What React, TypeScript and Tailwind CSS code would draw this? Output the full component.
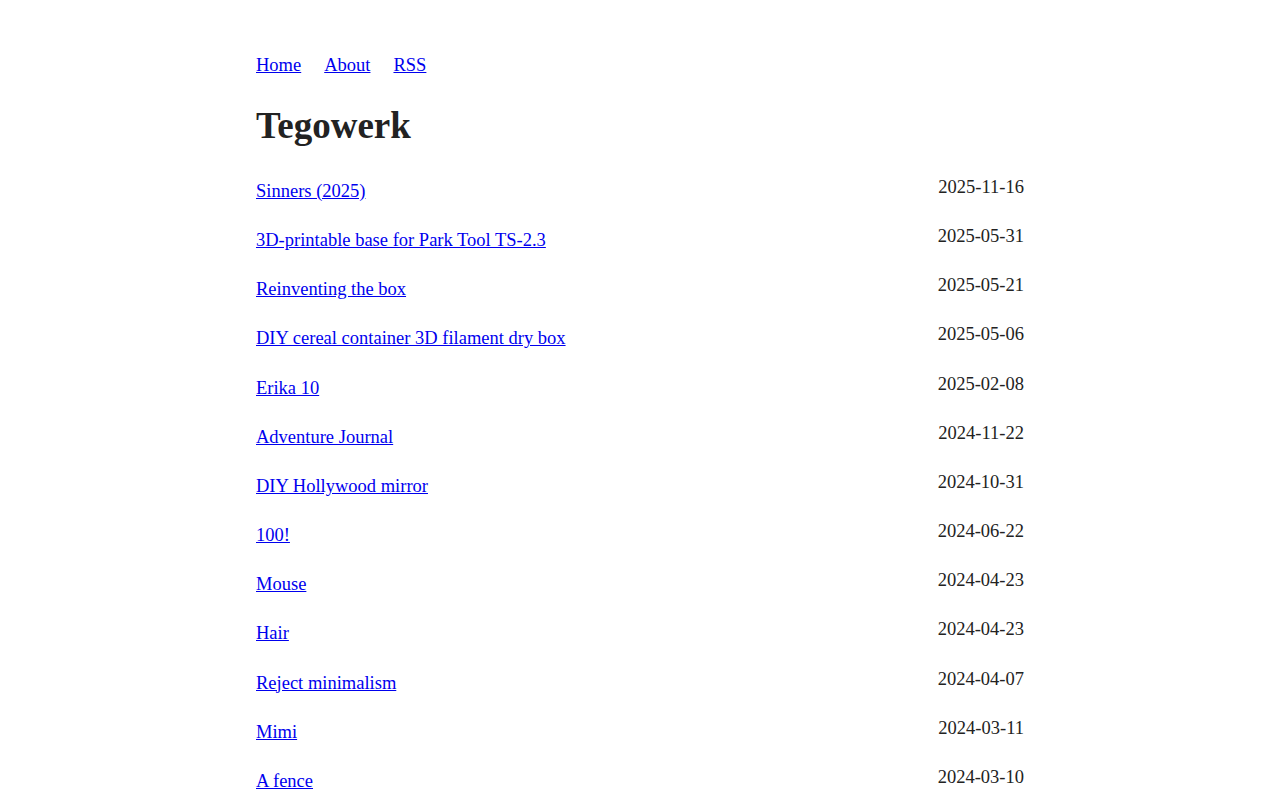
const posts: { title: string; date: string }[] = [
  { title: 'Sinners (2025)', date: '2025-11-16' },
  { title: '3D-printable base for Park Tool TS-2.3', date: '2025-05-31' },
  { title: 'Reinventing the box', date: '2025-05-21' },
  { title: 'DIY cereal container 3D filament dry box', date: '2025-05-06' },
  { title: 'Erika 10', date: '2025-02-08' },
  { title: 'Adventure Journal', date: '2024-11-22' },
  { title: 'DIY Hollywood mirror', date: '2024-10-31' },
  { title: '100!', date: '2024-06-22' },
  { title: 'Mouse', date: '2024-04-23' },
  { title: 'Hair', date: '2024-04-23' },
  { title: 'Reject minimalism', date: '2024-04-07' },
  { title: 'Mimi', date: '2024-03-11' },
  { title: 'A fence', date: '2024-03-10' },
];

export default function App() {
  return (
    <div className="min-h-screen bg-white font-['Liberation_Serif',serif] text-[18.5px] leading-[27px] text-[#222]">
      <main className="mx-auto max-w-[768px] pt-[52px]">
        <nav className="flex gap-[23px]">
          <a href="#" className="text-[#0000ee] underline">Home</a>
          <a href="#" className="text-[#0000ee] underline">About</a>
          <a href="#" className="text-[#0000ee] underline">RSS</a>
        </nav>
        <h1 className="mt-[26px] text-[37px] font-bold leading-[42px]">Tegowerk</h1>
        <ul className="mt-[27px]">
          {posts.map((p) => (
            <li key={p.title + p.date} className="flex h-[49.17px] items-start justify-between">
              <a href="#" className="pt-[4px] text-[#0000ee] underline">
                {p.title}
              </a>
              <span>{p.date}</span>
            </li>
          ))}
        </ul>
      </main>
    </div>
  );
}
